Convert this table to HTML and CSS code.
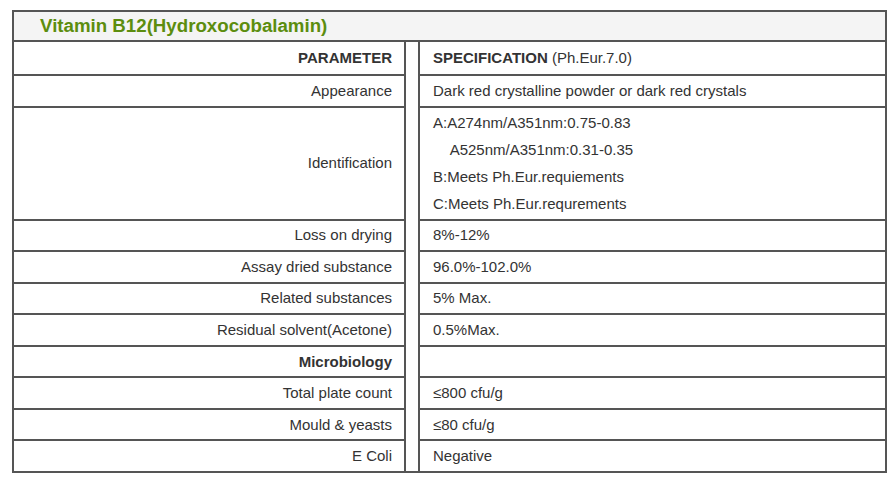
FILE: index.html
```html
<!DOCTYPE html>
<html>
<head>
<meta charset="utf-8">
<link rel="stylesheet" href="styles.css">
</head>
<body>
<div class="wrap">
<table class="spec">
  <colgroup>
    <col class="c-param">
    <col class="c-gap">
    <col class="c-spec">
  </colgroup>
  <tr class="r-title">
    <th colspan="3" class="title">Vitamin B12(Hydroxocobalamin)</th>
  </tr>
  <tr class="r-head">
    <td class="param"><b>PARAMETER</b></td>
    <td class="gap" rowspan="12"></td>
    <td class="val"><b>SPECIFICATION</b> (Ph.Eur.7.0)</td>
  </tr>
  <tr class="r-std">
    <td class="param">Appearance</td>
    <td class="val">Dark red crystalline powder or dark red crystals</td>
  </tr>
  <tr class="r-ident">
    <td class="param">Identification</td>
    <td class="val multi">
      <div class="line">A:A274nm/A351nm:0.75-0.83</div>
      <div class="line">&nbsp;&nbsp;&nbsp;&nbsp;A525nm/A351nm:0.31-0.35</div>
      <div class="line">B:Meets Ph.Eur.requiements</div>
      <div class="line">C:Meets Ph.Eur.requrements</div>
    </td>
  </tr>
  <tr class="r-std">
    <td class="param">Loss on drying</td>
    <td class="val">8%-12%</td>
  </tr>
  <tr class="r-std">
    <td class="param">Assay dried substance</td>
    <td class="val">96.0%-102.0%</td>
  </tr>
  <tr class="r-std">
    <td class="param">Related substances</td>
    <td class="val">5% Max.</td>
  </tr>
  <tr class="r-std">
    <td class="param">Residual solvent(Acetone)</td>
    <td class="val">0.5%Max.</td>
  </tr>
  <tr class="r-std">
    <td class="param"><b>Microbiology</b></td>
    <td class="val"></td>
  </tr>
  <tr class="r-std">
    <td class="param">Total plate count</td>
    <td class="val">≤800 cfu/g</td>
  </tr>
  <tr class="r-std">
    <td class="param">Mould &amp; yeasts</td>
    <td class="val">≤80 cfu/g</td>
  </tr>
  <tr class="r-std">
    <td class="param">E Coli</td>
    <td class="val">Negative</td>
  </tr>
</table>
</div>
</body>
</html>
```

FILE: styles.css
```css
html, body {
  margin: 0;
  padding: 0;
  background: #ffffff;
}

body {
  font-family: "Liberation Sans", Arial, sans-serif;
  font-size: 15px;
  color: #333333;
}

.wrap {
  padding: 10px 0 0 12px;
}

.spec {
  border-collapse: collapse;
  table-layout: fixed;
  width: 875px;
}

.c-param { width: 392px; }
.c-gap { width: 14px; }
.c-spec { width: 467px; }

.spec th,
.spec td {
  border: 2px solid #555555;
  padding: 0;
  vertical-align: middle;
  line-height: 20px;
}

.title {
  background: #f4f4f4;
  color: #5c8d0e;
  font-size: 18.7px;
  font-weight: bold;
  text-align: left;
  padding-left: 26px !important;
}

.r-title { height: 30px; }
.r-head { height: 34px; }
.r-std { height: 31.55px; }
.r-ident { height: 113px; }

.param {
  text-align: right;
  padding-right: 12px !important;
}

.val {
  text-align: left;
  padding-left: 13px !important;
}

.param b,
.val b {
  font-weight: bold;
}

.multi .line {
  line-height: 27px;
}
```
